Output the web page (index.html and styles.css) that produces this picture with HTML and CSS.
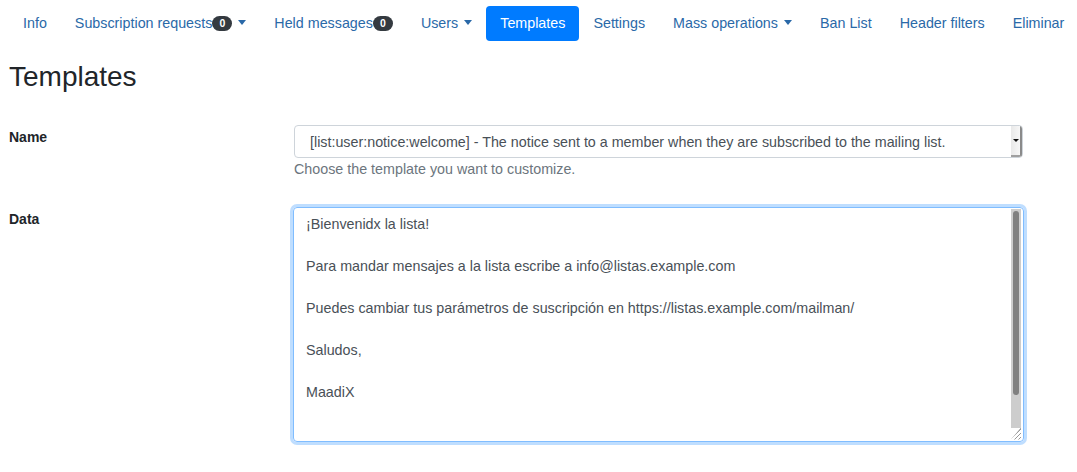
FILE: index.html
```html
<!DOCTYPE html>
<html lang="en">
  <head>
    <meta charset="UTF-8" />
    <meta name="viewport" content="width=device-width, initial-scale=1.0" />
    <title>Templates</title>
    <link rel="stylesheet" href="styles.css">
  </head>
  <body>
    <div class="page">
      <ul class="nav">
        <li><a href="#">Info</a></li>
        <li><a href="#" class="toggle">Subscription requests<span class="badge">0</span></a></li>
        <li><a href="#">Held messages<span class="badge">0</span></a></li>
        <li><a href="#" class="toggle">Users</a></li>
        <li><a href="#" class="active">Templates</a></li>
        <li><a href="#">Settings</a></li>
        <li><a href="#" class="toggle">Mass operations</a></li>
        <li><a href="#">Ban List</a></li>
        <li><a href="#">Header filters</a></li>
        <li><a href="#">Eliminar</a></li>
      </ul>

      <h2 class="title">Templates</h2>

      <form class="form">
        <label class="label">Name</label>
        <div class="field">
          <div class="select">
            <span class="select-text">[list:user:notice:welcome] - The notice sent to a member when they are subscribed to the mailing list.</span>
            <span class="select-btn"><i></i></span>
          </div>
          <small class="help">Choose the template you want to customize.</small>
        </div>

        <label class="label data">Data</label>
        <div class="field">
          <div class="textarea">
            <div class="textarea-text">
              <p>¡Bienvenidx la lista!</p>
              <p>&nbsp;</p>
              <p>Para mandar mensajes a la lista escribe a info@listas.example.com</p>
              <p>&nbsp;</p>
              <p>Puedes cambiar tus parámetros de suscripción en https://listas.example.com/mailman/</p>
              <p>&nbsp;</p>
              <p>Saludos,</p>
              <p>&nbsp;</p>
              <p>MaadiX</p>
            </div>
            <div class="scrollbar">
              <div class="track"><div class="thumb"></div></div>
              <div class="grip"></div>
            </div>
          </div>
        </div>
      </form>
    </div>
  </body>
</html>
```

FILE: styles.css
```css
* {
  margin: 0;
  padding: 0;
  box-sizing: border-box;
}

body {
  font-family: "Liberation Sans", Arial, sans-serif;
  font-size: 14px;
  line-height: 1.5;
  color: #212529;
  background: #fff;
}

.page {
  padding: 6px 9px;
}

.nav {
  display: flex;
  list-style: none;
}

.nav a {
  display: block;
  padding: 7px 14px;
  font-size: 14.3px;
  line-height: 21px;
  color: #2a69a8;
  text-decoration: none;
  border-radius: 4px;
  white-space: nowrap;
}

.nav a.active {
  background: #007bff;
  color: #fff;
}

.nav a.toggle::after {
  content: "";
  display: inline-block;
  margin-left: 6px;
  vertical-align: 3px;
  border-top: 5px solid;
  border-left: 4px solid transparent;
  border-right: 4px solid transparent;
}

.badge {
  display: inline-block;
  min-width: 20px;
  padding: 2px 6px;
  font-size: 10.5px;
  font-weight: bold;
  line-height: 1;
  text-align: center;
  color: #fff;
  background: #343a40;
  border-radius: 10px;
  vertical-align: 1px;
}

.title {
  margin: 19px 0 31px;
  font-size: 28px;
  font-weight: normal;
  line-height: 1.2;
}

.form {
  display: grid;
  grid-template-columns: 284px 731px;
  row-gap: 27px;
}

.label {
  padding-top: 2px;
  font-weight: bold;
}

.select {
  display: flex;
  align-items: stretch;
  height: 33px;
  margin-left: 1px;
  width: 729px;
  border: 1px solid #ced4da;
  border-radius: 4px;
  font-size: 14.3px;
  color: #495057;
  overflow: hidden;
}

.select-text {
  flex: 1;
  padding: 6px 0 0 15px;
  line-height: 21px;
  white-space: nowrap;
}

.select-btn {
  width: 11px;
  display: flex;
  align-items: center;
  justify-content: center;
  background: linear-gradient(to right, #e9e9e9, #f7f7f7);
  border-right: 2px solid #8a8a8a;
  border-bottom: 2px solid #a0a0a0;
}

.select-btn i {
  border-top: 3px solid #111;
  border-left: 3px solid transparent;
  border-right: 3px solid transparent;
}

.help {
  display: block;
  margin: 1px 0 0 1px;
  font-size: 14.3px;
  line-height: 21px;
  color: #6c757d;
}

.textarea {
  display: flex;
  height: 235px;
  border: 1px solid #80bdff;
  border-radius: 4px;
  box-shadow: 0 0 0 3px rgba(0, 123, 255, 0.25);
  font-size: 14.3px;
  line-height: 21.1px;
  color: #495057;
  overflow: hidden;
}

.textarea-text {
  flex: 1;
  padding: 6px 12px;
}

.scrollbar {
  width: 14px;
  display: flex;
  flex-direction: column;
  padding: 1px 2px 1px 2px;
}

.track {
  flex: 1;
  background: #cdcdcd;
  padding: 2px 2px;
}

.thumb {
  height: 184px;
  background: #808080;
  border-radius: 3px;
}

.grip {
  height: 12px;
  background: repeating-linear-gradient(135deg, #fff 0 1px, #999 1px 2px, #fff 2px 3px);
  clip-path: polygon(100% 0, 100% 100%, 0 100%);
}
```
